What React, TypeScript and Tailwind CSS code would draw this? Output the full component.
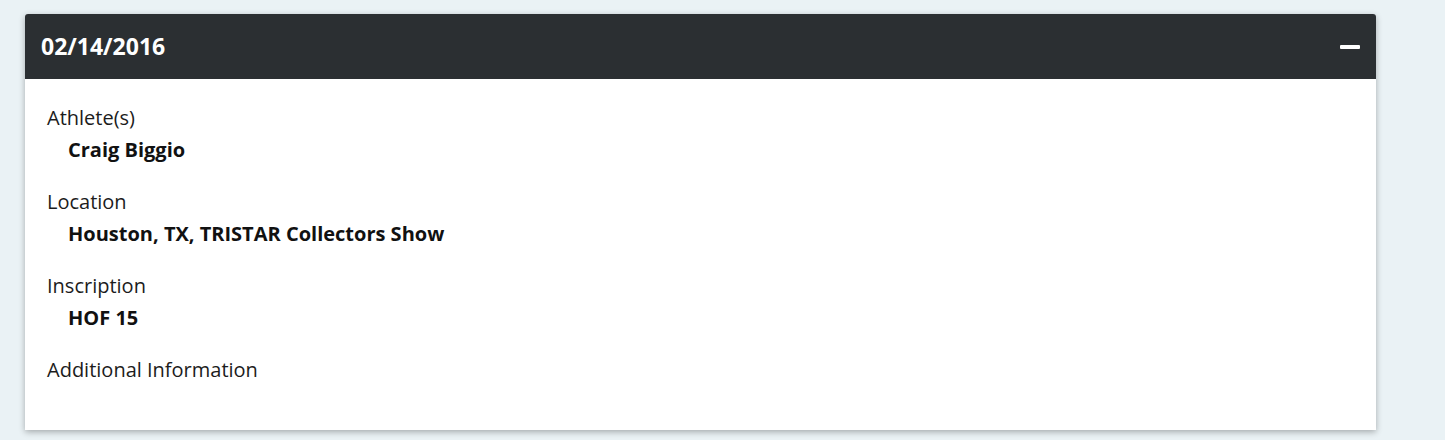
import { useState } from "react";

interface DetailInterface {
  label: string;
  value?: string;
}

const details: DetailInterface[] = [
  { label: "Athlete(s)", value: "Craig Biggio" },
  { label: "Location", value: "Houston, TX, TRISTAR Collectors Show" },
  { label: "Inscription", value: "HOF 15" },
  { label: "Additional Information" },
];

function DetailRow({ detail }: { detail: DetailInterface }) {
  return (
    <div className="flex flex-col">
      <p className="text-[20px] leading-[32px] text-[#1c1c1c]">{detail.label}</p>
      {detail.value ? (
        <p className="pl-[21px] text-[20px] leading-[32px] font-bold text-[#111]">
          {detail.value}
        </p>
      ) : null}
    </div>
  );
}

export default function App() {
  const [open, setOpen] = useState(true);
  return (
    <div
      className="min-h-[440px] bg-[#eaf2f5] pt-[14px] pl-[25px] pr-[69px]"
      style={{ fontFamily: '"Open Sans", "Liberation Sans", sans-serif' }}
    >
      <div className="flex flex-col shadow-[0_2px_6px_rgba(0,0,0,0.3)] rounded-t-[3px]">
        <button
          className="flex h-[65px] items-center justify-between rounded-t-[3px] bg-[#2b2f32] pl-[16px] pr-[16px] text-left"
          onClick={() => setOpen(!open)}
        >
          <span className="text-[23px] font-bold text-white">02/14/2016</span>
          <span className="block h-[4px] w-[20px] rounded-[1px] bg-white" />
        </button>
        {open ? (
          <div className="flex flex-col gap-[20px] bg-white pt-[23px] pb-[44px] pl-[22px]">
            {details.map((detail) => (
              <DetailRow key={detail.label} detail={detail} />
            ))}
          </div>
        ) : null}
      </div>
    </div>
  );
}
